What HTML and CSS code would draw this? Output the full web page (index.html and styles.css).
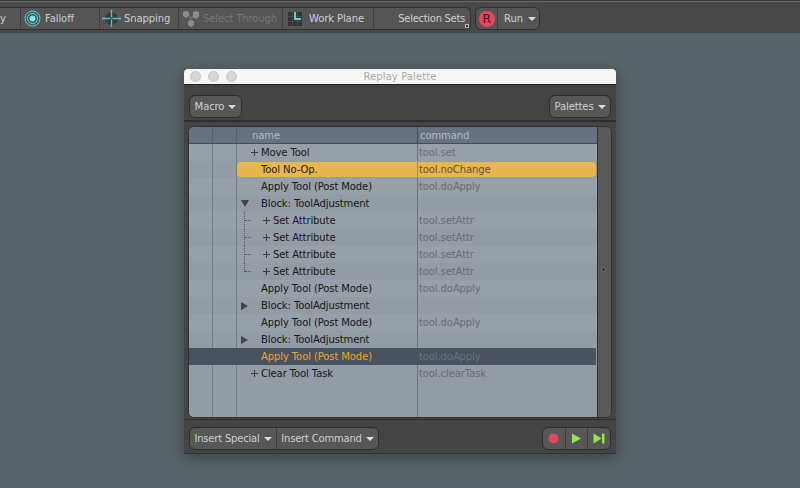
FILE: index.html
```html
<!DOCTYPE html>
<html lang="en">
<head>
<meta charset="utf-8">
<title>Replay Palette</title>
<link rel="stylesheet" href="styles.css">
</head>
<body>
<header class="topbar">
  <div class="tgroup">
    <div class="titem t-y"><span class="tlabel">y</span></div>
    <div class="titem t-falloff">
      <svg width="17" height="17" viewBox="0 0 17 17"><circle cx="8.5" cy="8.5" r="7.5" fill="#3d5f63" stroke="#5fd0d6" stroke-width="1"/><circle cx="8.5" cy="8.5" r="5" fill="#3f4c4e" stroke="#6fdde2" stroke-width="1"/><circle cx="8.5" cy="8.5" r="3" fill="#7fe6ea"/></svg>
      <span class="tlabel">Falloff</span>
    </div>
    <div class="titem t-snap">
      <svg width="19" height="19" viewBox="0 0 19 19"><circle cx="9.5" cy="9.5" r="6.500" fill="#3a3a3a"/><path d="M0 9.5h8.500M10.500 9.5H19M9.5 1v7.500M9.5 10.500V18" stroke="#4fc4ca" stroke-width="1.4"/></svg>
      <span class="tlabel">Snapping</span>
    </div>
    <div class="titem t-select">
      <svg width="18" height="18" viewBox="0 0 18 18"><path d="M1 2l3-1 3 1v4l-3 2-3-2zM11 2l3-1 3 1v5l-3 2-3-2zM6 11l3-1 3 1v4l-3 2-3-2z" fill="#8c8c8c"/><path d="M7 5l2 2 2-2v3l-2 2-2-2z" fill="#6e6e6e"/></svg>
      <span class="tlabel dim">Select Through</span>
    </div>
    <div class="titem t-plane">
      <svg width="14" height="14" viewBox="0 0 14 14"><rect width="14" height="14" fill="#333"/><path d="M0 4.5h14M0 9.5h14M4.5 0v14M9.500 0v14" stroke="#4a4a4a" stroke-width="1"/><path d="M7 0v7h6" fill="none" stroke="#5fd0d6" stroke-width="2"/></svg>
      <span class="tlabel">Work Plane</span>
    </div>
    <div class="titem t-sets"><span class="tlabel narrow">Selection Sets</span><i class="corner"></i></div>
  </div>
  <div class="tgroup run">
    <div class="r-cell"><span class="r-badge">R</span></div>
    <div class="run-cell"><span class="tlabel">Run</span><i class="caret"></i></div>
  </div>
</header>

<section class="window">
  <div class="titlebar">
    <div class="lights"><i></i><i></i><i></i></div>
    <span class="wtitle">Replay Palette</span>
  </div>
  <div class="toolrow">
    <button class="btn">Macro<i class="caret"></i></button>
    <button class="btn">Palettes<i class="caret"></i></button>
  </div>
  <div class="listpane">
    <div class="list">
      <div class="row head"><span class="c0"></span><span class="c1"></span><span class="c2 hname">name</span><span class="c3">command</span></div>
      <div class="row"><span class="c0"></span><span class="c1"></span><span class="c2"><i class="plus p1"></i>Move Tool</span><span class="c3">tool.set</span></div>
      <div class="row sel"><span class="c0"></span><span class="c1"></span><span class="c2">Tool No-Op.</span><span class="c3">tool.noChange</span></div>
      <div class="row"><span class="c0"></span><span class="c1"></span><span class="c2">Apply Tool (Post Mode)</span><span class="c3">tool.doApply</span></div>
      <div class="row"><span class="c0"></span><span class="c1"></span><span class="c2"><i class="tri down"></i>Block: ToolAdjustment</span><span class="c3"></span></div>
      <div class="row child"><span class="c0"></span><span class="c1"></span><span class="c2"><i class="guide"></i><i class="plus p2"></i>Set Attribute</span><span class="c3">tool.setAttr</span></div>
      <div class="row child"><span class="c0"></span><span class="c1"></span><span class="c2"><i class="guide"></i><i class="plus p2"></i>Set Attribute</span><span class="c3">tool.setAttr</span></div>
      <div class="row child"><span class="c0"></span><span class="c1"></span><span class="c2"><i class="guide"></i><i class="plus p2"></i>Set Attribute</span><span class="c3">tool.setAttr</span></div>
      <div class="row child last"><span class="c0"></span><span class="c1"></span><span class="c2"><i class="guide"></i><i class="plus p2"></i>Set Attribute</span><span class="c3">tool.setAttr</span></div>
      <div class="row"><span class="c0"></span><span class="c1"></span><span class="c2">Apply Tool (Post Mode)</span><span class="c3">tool.doApply</span></div>
      <div class="row"><span class="c0"></span><span class="c1"></span><span class="c2"><i class="tri right"></i>Block: ToolAdjustment</span><span class="c3"></span></div>
      <div class="row"><span class="c0"></span><span class="c1"></span><span class="c2">Apply Tool (Post Mode)</span><span class="c3">tool.doApply</span></div>
      <div class="row"><span class="c0"></span><span class="c1"></span><span class="c2"><i class="tri right"></i>Block: ToolAdjustment</span><span class="c3"></span></div>
      <div class="row cur"><span class="c0"></span><span class="c1"></span><span class="c2">Apply Tool (Post Mode)</span><span class="c3">tool.doApply</span></div>
      <div class="row"><span class="c0"></span><span class="c1"></span><span class="c2"><i class="plus p1"></i>Clear Tool Task</span><span class="c3">tool.clearTask</span></div>
      <div class="filler"><span class="c0"></span><span class="c1"></span><span class="c2"></span><span class="c3"></span></div>
    </div>
    <div class="scroll"><i class="grip"></i></div>
  </div>
  <div class="bottomrow">
    <div class="btn-group">
      <button class="gbtn">Insert Special<i class="caret"></i></button>
      <button class="gbtn">Insert Command<i class="caret"></i></button>
    </div>
    <div class="btn-group transport">
      <button class="tbtn"><svg width="11" height="11" viewBox="0 0 11 11"><circle cx="5.500" cy="5.500" r="5" fill="#e0495f"/></svg></button>
      <button class="tbtn"><svg width="11" height="11" viewBox="0 0 11 11"><path d="M1 .5L10 5.500 1 10.500z" fill="#8fe84f"/></svg></button>
      <button class="tbtn"><svg width="12" height="11" viewBox="0 0 12 11"><path d="M.5 .5L8.500 5.500 .5 10.500z" fill="#8fe84f"/><rect x="9" y=".5" width="2.500" height="10" fill="#8fe84f"/></svg></button>
    </div>
  </div>
</section>
</body>
</html>
```
FILE: styles.css
```css
* { box-sizing: border-box; }
html, body { margin: 0; height: 100%; }
body {
  width: 800px; height: 488px; overflow: hidden; position: relative;
  background: #59646a;
  font-family: "DejaVu Sans", sans-serif;
  font-size: 10px;
  letter-spacing: -.1px;
}
.topbar {
  height: 33px;
  background: #484848;
  border-top: 1px solid #3a3a3a;
  display: flex; align-items: flex-start; gap: 4px;
  padding-top: 6px;
  box-shadow: inset 0 1px 0 #6a6a6a;
}
.tgroup {
  height: 23px; display: flex;
  background: #555;
  border: 1px solid #2f2f2f;
  border-left: 0;
  border-radius: 0 6px 6px 0;
}
.titem { display: flex; align-items: center; height: 100%; border-right: 1px solid #3e3e3e; gap: 4px; }
.titem:last-child { border-right: 0; }
.t-y { width: 21px; }
.t-falloff { width: 79px; padding-left: 3px; }
.t-snap { width: 79px; padding-left: 2px; gap: 3px; }
.t-select { width: 104px; padding-left: 3px; gap: 3px; }
.t-plane { width: 91px; padding-left: 5px; gap: 7px; }
.t-sets { width: 96px; justify-content: flex-end; padding-right: 5px; position: relative; }
.tlabel { color: #d0d0d0; white-space: nowrap; }
.narrow { letter-spacing: -.3px; }
.dim { color: #777; }
.corner { position: absolute; right: 1px; bottom: 1px; width: 4px; height: 4px; background: #2c2c2c; border: 1px solid #bbb; }
.run { border-left: 1px solid #2f2f2f; border-radius: 6px; }
.r-cell { width: 22px; display: flex; align-items: center; justify-content: center; border-right: 1px solid #3e3e3e; }
.r-badge {
  width: 16px; height: 16px; border-radius: 50%; background: #e5475f; color: #3a0a14;
  font-size: 12px; line-height: 16px; text-align: center;
}
.run-cell { width: 41px; display: flex; align-items: center; gap: 5px; padding-left: 6px; }
.caret { display: inline-block; width: 0; height: 0; border: 4px solid transparent; border-top: 4px solid #ddd; border-bottom: 0; }

.window {
  position: absolute; left: 184px; top: 69px; width: 432px; height: 385px;
  background: #444;
  box-shadow: 0 4px 14px rgba(0,0,0,.35);
  display: flex; flex-direction: column;
  border-bottom: 1px solid #333;
}
.titlebar {
  height: 16px; background: #f7f7f7; border-radius: 4px 4px 0 0;
  position: relative; display: flex; justify-content: center; align-items: center;
  border-bottom: 1px solid #222;
}
.lights { position: absolute; left: 6px; top: 2px; display: flex; gap: 7px; }
.lights i { width: 11px; height: 11px; border-radius: 50%; background: #d6d6d6; border: 1px solid #c6c6c6; }
.wtitle { color: #a9a9a9; font-size: 10px; letter-spacing: .1px; }
.toolrow {
  height: 37px; padding: 10px 5px 0; display: flex; justify-content: space-between; align-items: flex-start;
  border-bottom: 2px solid #2e2e2e;
}
.btn, .gbtn {
  font: inherit; letter-spacing: inherit; color: #cfcfcf; background: #575757;
  height: 23px; display: flex; align-items: center; justify-content: center; gap: 4px; padding: 0;
}
.btn { width: 53px; border: 1px solid #2d2d2d; border-radius: 6px; }
.btn:last-child { width: 62px; }
.listpane {
  height: 292px; margin: 4px 4px 1px; display: flex; background: #575757; flex: none;
  border: 1px solid #2f2f2f; border-radius: 6px; overflow: hidden;
}
.list { width: 408px; display: flex; flex-direction: column; background: #939ba5; }
.row, .filler { display: flex; position: relative; flex: none; }
.row { height: 17px; line-height: 17px; background: #939ba5; }
.row:nth-child(even) { background: #979fa9; }
.row span, .filler span { display: block; height: 100%; white-space: nowrap; }
.c0, .c1 { width: 24px; border-right: 1px solid #727a86; flex: none; }
.c2 { width: 181px; border-right: 1px solid #6a7280; flex: none; padding-left: 24px; color: #161616; position: relative; }
.c3 { flex: 1; padding-left: 1px; color: #676d75; }
.row.head { height: 17px; background: #68727f; border-bottom: 1px solid #454d58; line-height: 17px; }
.head .c0, .head .c1 { border-right-color: #565f6b; }
.head .c2 { color: #b4bbc3; padding-left: 15px; border-right-color: #454d58; }
.head .c3 { color: #b4bbc3; padding-left: 2px; }
.row.sel span.c2, .row.sel span.c3 { background: #e8b54e; color: #222; height: 15px; margin: 1px 0; line-height: 15px; }
.row.sel span.c2 { border-radius: 4px 0 0 4px; border-right-color: #a88a4c; }
.row.sel span.c3 { border-radius: 0 4px 4px 0; color: #5c5340; margin-right: 1px; }
.row.cur { background: #49525e; width: 407px; }
.cur .c2 { color: #f0a52e; border-right-color: #49525e; }
.cur .c3 { color: #6a727c; }
.cur .c0, .cur .c1 { border-right-color: #49525e; }
.filler { flex: 1; background: #939ba5; }
.plus { position: absolute; top: 5px; width: 7px; height: 7px;
  background: linear-gradient(#3a3a3a,#3a3a3a) center/7px 1px no-repeat, linear-gradient(#3a3a3a,#3a3a3a) center/1px 7px no-repeat; }
.p1 { left: 14px; }
.p2 { left: 26px; }
.child .c2 { padding-left: 36px; }
.guide { position: absolute; left: 7px; top: 0; bottom: 0;
  border-left: 1px dotted #555; }
.guide::after { content: ""; position: absolute; left: 0; top: 8px; width: 6px; border-top: 1px dotted #555; }
.last .guide { bottom: 8px; }
.tri { position: absolute; left: 4px; width: 0; height: 0; }
.tri.down { top: 5px; border: 4px solid transparent; border-top: 7px solid #444; border-bottom: 0; }
.tri.right { top: 5px; border: 4px solid transparent; border-left: 7px solid #444; border-right: 0; }
.scroll { flex: 1; background: #595959; position: relative; border-left: 1px solid #333; }
.grip { position: absolute; left: 3px; top: 140px; width: 5px; height: 5px; border-radius: 50%; background: #333; border: 1px solid #777; }
.bottomrow { flex: 1; padding: 7px 5px 0; display: flex; justify-content: space-between; align-items: flex-start; border-top: 1px solid #2e2e2e; }
.btn-group { height: 23px; display: flex; border: 1px solid #2d2d2d; border-radius: 6px; background: #575757; overflow: hidden; }
.gbtn { border: 0; border-right: 1px solid #3e3e3e; background: transparent; height: 100%; letter-spacing: -.2px; }
.gbtn:first-child { width: 87px; }
.gbtn:last-child { width: 101px; border-right: 0; }
.transport { width: 69px; }
.tbtn { flex: 1; border: 0; border-right: 1px solid #3e3e3e; background: transparent; padding: 0; display: flex; align-items: center; justify-content: center; }
.tbtn:last-child { border-right: 0; }
```
